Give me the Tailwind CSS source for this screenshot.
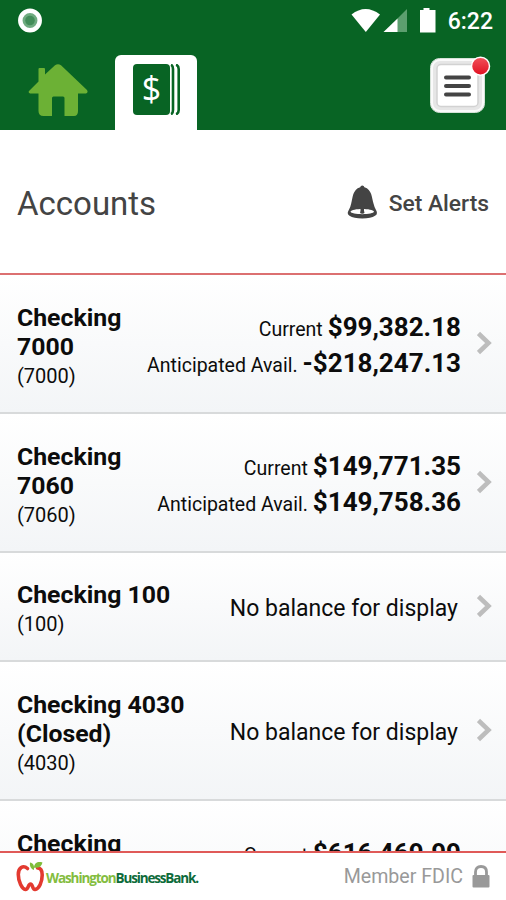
<!DOCTYPE html>
<html lang="en">
<head>
  <meta charset="UTF-8" />
  <meta name="viewport" content="width=device-width, initial-scale=1.0"/>
  <title>Accounts - Washington Business Bank</title>
  <script src="https://cdn.jsdelivr.net/npm/@tailwindcss/browser@4"></script>
</head>
<body class="bg-white text-[#0c0c0c] font-[Roboto,sans-serif]">
  <div class="flex flex-col w-[506px] h-[900px] overflow-hidden">

    <!-- Header -->
    <header class="h-[130px] shrink-0 bg-[#086424] flex flex-col justify-between">
      <!-- Status bar -->
      <div class="h-10 pl-[18px] pr-[13px] flex items-center justify-between">
        <svg width="25" height="25" viewBox="0 0 25 25">
          <circle cx="12" cy="12.500" r="9.700" fill="#6fab80" stroke="#fff" stroke-width="4.500"/>
          <circle cx="12" cy="12.500" r="4.800" fill="#438d59"/>
        </svg>
        <div class="flex items-center">
          <svg width="86" height="26" viewBox="0 0 86 26">
            <path d="M0.500 7.500Q14.500 -3.500 29 7.500L14.800 25Z" fill="#fff"/>
            <path d="M56 2V25H46V12Z" fill="#5c9f6f"/>
            <path d="M46.500 11.500V25H32.500Z" fill="#fff"/>
            <path d="M72.500 1h6v2h6v22.500H69V3H72.500Z" fill="#fff"/>
          </svg>
          <span class="ml-[11px] pt-[3px] text-[23px] leading-none font-medium text-white">6:22</span>
        </div>
      </div>
      <!-- Tabs -->
      <nav class="h-[76px] pl-7 pr-[14px] flex justify-between">
        <div class="flex">
          <a href="#" class="mt-[9px]">
            <svg width="60" height="54" viewBox="0 0 60 54" fill="#6cb135">
              <path d="M27 2.300Q30 0 33 2.300L59 27Q60.500 29.500 58 30.500H50V48Q50 53 46 53H36.500V35Q36.500 33.500 35 33.500H25.500Q24 33.500 24 35V53H15.500Q10.500 53 10.500 48V30.500H2Q-.5 29.500 1.500 27.500L10.500 18.500V6Q10.500 5 11.500 5H16Q17 5 17 6V11.500Z"/>
            </svg>
          </a>
          <a href="#" class="ml-[27px] mt-px w-[82px] bg-white rounded-t-md flex justify-center pt-[9px]">
            <svg width="47" height="51" viewBox="0 0 47 51">
              <rect x="0" y="0" width="37" height="51" rx="4" fill="#086424"/>
              <path d="M38 .8Q40 1.500 40 5V46Q40 49.500 38 50.200M43 .8Q45.700 1.500 45.700 5V46Q45.700 49.500 43 50.200" fill="none" stroke="#086424" stroke-width="2.600"/>
              <text x="18.500" y="37" text-anchor="middle" font-family="Open Sans" font-size="34" fill="#fff">$</text>
            </svg>
          </a>
        </div>
        <svg class="mt-[2px]" width="64" height="58" viewBox="0 0 64 58">
          <defs>
            <linearGradient id="dot" x1="0" y1="0" x2="0" y2="1"><stop offset="0" stop-color="#f2515a"/><stop offset="1" stop-color="#e00f20"/></linearGradient>
          </defs>
          <rect x="2.500" y="2.500" width="54" height="54" rx="9" fill="#e6e6e6" stroke="#d5e2d8" stroke-width="1"/>
          <rect x="4" y="4" width="51" height="51" rx="8" fill="none" stroke="#fafafa" stroke-width="2"/>
          <rect x="9" y="8.500" width="41" height="42" rx="4" fill="#fff" stroke="#d2d2d2" stroke-width="1.500"/>
          <path d="M18 21.500H41M18 30H41M18 38.500H41" stroke="#444" stroke-width="4" stroke-linecap="round"/>
          <circle cx="52.500" cy="10.200" r="9" fill="url(#dot)" stroke="#fff" stroke-width="1.500"/>
        </svg>
      </nav>
    </header>

    <!-- Page title -->
    <section class="h-[145px] shrink-0 px-[17px] border-b-2 border-[#dc7071] flex items-center justify-between text-[#444444]">
      <h1 class="pt-[3px] text-[33px] leading-none">Accounts</h1>
      <a href="#" class="flex items-center text-[22.8px] leading-none font-medium">
        <svg class="mr-[11px]" width="31" height="34" viewBox="0 0 31 34">
          <path d="M15.300 .5Q17 .5 17.400 2.300C25 4.500 24.800 13 26.500 18.500Q27.300 22 29 25Q31.300 29 28 30.800Q24 33.500 15.300 33.500T2.500 30.800Q-.7 29 1.800 25Q3.500 22 4.200 18.500C5.800 13 5.500 4.500 13.200 2.300Q13.600 .5 15.300 .5Z" fill="#444"/>
          <path d="M3.500 26.500C5 23 25.500 23 27 26.500C27 30 3.500 30 3.500 26.500Z" fill="#fff"/>
          <path d="M13.500 23.500H17V26Q18.500 28.800 15.300 28.800T13.500 26Z" fill="#444"/>
        </svg>
        <span class="pt-[5px]">Set Alerts</span>
      </a>
    </section>

    <!-- Account list -->
    <main id="accounts" class="flex-1 min-h-0 overflow-hidden"></main>

    <!-- Footer -->
    <footer class="h-[49px] shrink-0 pl-4 pr-4 border-t-2 border-[#e05a58] flex items-center justify-between">
      <div class="flex items-center">
        <svg width="29" height="31" viewBox="0 0 29 31">
          <path d="M11.500 7.500C7 3.500 2.300 7 2.300 13.500C2.300 20.500 6 28 9.500 28.500C12.500 28.500 12 23 14.500 23S16 28.500 19 28.500C23 28 26.200 21 26.200 14C26.200 9.500 24.500 7 21.500 7" fill="none" stroke="#e33a30" stroke-width="3.600" stroke-linecap="round"/>
          <path d="M14 1.500C17 2 18.500 4 18 9C15 8 13.500 5 14 1.500ZM18 6.500C18.500 1.500 22 .3 26.500 1.500C25.500 6 22 7.500 18 6.500Z" fill="#7fbd3a"/>
        </svg>
        <span class="ml-px pt-[2px] text-[13.5px] leading-4 font-bold font-['Open_Sans',sans-serif] whitespace-nowrap flex"><span class="text-[#84bd3f] tracking-[-1.1px]">Washington</span><span class="text-[#0d6b3a] tracking-[-1.15px]">BusinessBank.</span></span>
      </div>
      <div class="flex items-center text-[#999999] text-[19.6px] leading-5">
        <span>Member FDIC</span>
        <svg class="ml-[9px]" width="18" height="23" viewBox="0 0 18 23">
          <path d="M3.500 12V7Q3.500 1.500 9 1.500T14.500 7V12" fill="none" stroke="#999" stroke-width="2.800"/>
          <rect x="0.500" y="10" width="17" height="12.500" rx="1" fill="#999"/>
        </svg>
      </div>
    </footer>
  </div>

  <script>
    const accounts = [
      { name: 'Checking<br>7000', number: '7000', current: '$99,382.18', available: '-$218,247.13' },
      { name: 'Checking<br>7060', number: '7060', current: '$149,771.35', available: '$149,758.36' },
      { name: 'Checking 100', number: '100' },
      { name: 'Checking 4030<br>(Closed)', number: '4030' },
      { name: 'Checking<br>7080', number: '7080', current: '$616,469.99', available: '$616,469.99' },
    ];

    // Balances column, or a note when the account has none
    function balance(a) {
      if (!a.current) {
        return '<p class="pt-[2px] pr-[3px] text-[23px] leading-9">No balance for display</p>';
      }
      return `
        <p class="h-9 flex items-baseline justify-end gap-[5px]"><span class="text-[19.5px]">Current</span><b class="text-[26px]">${a.current}</b></p>
        <p class="h-9 flex items-baseline justify-end gap-[5px]"><span class="text-[19.5px]">Anticipated Avail.</span><b class="text-[26px]">${a.available}</b></p>
      `;
    }

    document.getElementById('accounts').innerHTML = accounts.map(a => `
      <a href="#" class="flex items-center justify-between pl-[17px] pr-[14px] pt-[27.75px] pb-[21px] border-b-2 border-[#d8dadb] bg-linear-to-b from-white to-[#f3f5f7]">
        <div>
          <h2 class="text-[24.8px] leading-[29px] font-bold">${a.name}</h2>
          <p class="text-[20px] leading-[30px]">(${a.number})</p>
        </div>
        <div class="flex items-center pb-2">
          <div class="pt-1 text-right leading-9 whitespace-nowrap">${balance(a)}</div>
          <svg class="ml-4" width="15" height="24" viewBox="0 0 15 24">
            <path d="M1.500 2.500L11.500 12L1.500 21.500" fill="none" stroke="#bdbdbd" stroke-width="4.500"/>
          </svg>
        </div>
      </a>
    `).join('');
  </script>
</body>
</html>
